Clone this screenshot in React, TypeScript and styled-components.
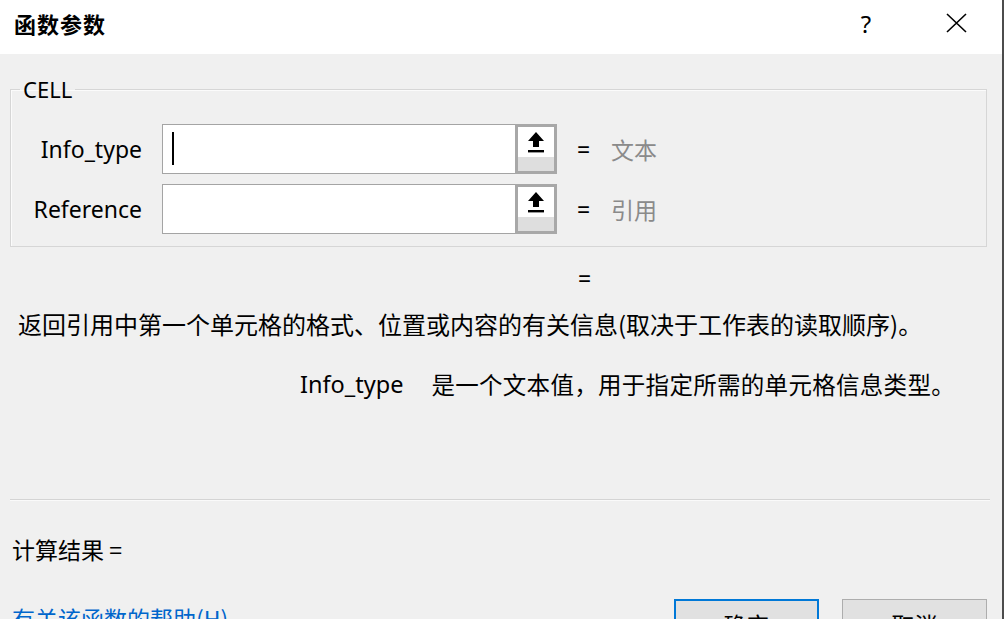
import React from 'react';
import styled, {createGlobalStyle} from 'styled-components';

const GlobalStyle = createGlobalStyle`
    html, body {
        margin: 0;
        padding: 0;
        background: #f0f0f0;
    }
    body {
        font-family: "Noto Sans", "Noto Sans CJK SC", sans-serif;
        color: #000;
    }
`;

const Window = styled.div`
    width: 1002px;
    height: 619px;
    overflow: hidden;
    background: #f0f0f0;
    border-right: 2px solid #4c4c4c;
    display: flex;
    flex-direction: column;
`;

const TitleBar = styled.div`
    height: 54px;
    flex-shrink: 0;
    background: #fff;
    display: flex;
    align-items: center;
    padding-left: 14px;
`;

const Title = styled.div`
    font-family: "Noto Sans CJK SC", sans-serif;
    font-size: 22px;
    font-weight: 700;
    letter-spacing: 1px;
    flex: 1;
    margin-top: -8px;
`;

const TitleButton = styled.div<{$w: number}>`
    width: ${(p) => p.$w}px;
    height: 44px;
    display: flex;
    align-items: center;
    justify-content: center;
    font-size: 24px;
    margin-top: -8px;
`;

const Body = styled.div`
    flex: 1;
    padding: 20px 15px 0 10px;
    display: flex;
    flex-direction: column;
`;

const GroupBox = styled.fieldset`
    margin: 0;
    padding: 20px 0 12px 0;
    border: 1px solid #d6d6d6;
    box-shadow: inset 1px 1px 0 #fbfbfb;
    min-width: 0;
`;

const Legend = styled.legend`
    margin-left: 9px;
    padding: 0 3px;
    font-size: 22px;
    line-height: 30px;
`;

const ArgGrid = styled.div`
    display: grid;
    grid-template-columns: 131px 395px 14px 1fr;
    column-gap: 20px;
    row-gap: 10px;
`;

const ArgLabel = styled.div`
    text-align: right;
    font-size: 23px;
    line-height: 50px;
`;

const InputWrap = styled.div`
    display: flex;
    height: 50px;
`;

const TextBox = styled.div`
    flex: 1;
    background: #fff;
    border: 1px solid #a4a4a4;
    border-right: none;
    position: relative;
`;

const Caret = styled.div`
    position: absolute;
    left: 9px;
    top: 7px;
    width: 2px;
    height: 33px;
    background: #000;
`;

const RefButton = styled.div`
    width: 36px;
    border: 3px solid #a8a8a8;
    background: #dedede;
    display: flex;
    flex-direction: column;
`;

const RefFace = styled.div`
    height: 30px;
    background: #fff;
    display: flex;
    align-items: center;
    justify-content: center;
`;

const EqualsCell = styled.div`
    font-size: 23px;
    line-height: 50px;
`;

const ValueCell = styled.div`
    font-family: "Noto Sans CJK SC", sans-serif;
    font-size: 23px;
    line-height: 50px;
    color: #8a8a8a;
`;

const ResultEquals = styled.div`
    margin-top: 18px;
    margin-left: 568px;
    font-size: 23px;
    line-height: 26px;
`;

const Description = styled.div`
    margin-top: 18px;
    padding-left: 8px;
    font-family: "Noto Sans CJK SC", sans-serif;
    font-size: 24px;
    line-height: 30px;
    white-space: nowrap;
`;

const DetailLine = styled.div`
    margin-top: 30px;
    padding-left: 290px;
    display: flex;
    font-size: 23.5px;
    line-height: 30px;
    white-space: nowrap;
`;

const DetailName = styled.span`
    font-family: "Noto Sans", sans-serif;
    margin-right: 28px;
`;

const DetailText = styled.span`
    font-family: "Noto Sans CJK SC", sans-serif;
    letter-spacing: 0.3px;
`;

const Separator = styled.div`
    margin-top: 100px;
    width: 980px;
    height: 1px;
    background: #d4d4d4;
    box-shadow: 0 1px 0 #fafafa;
`;

const ResultLine = styled.div`
    margin-top: 34px;
    padding-left: 2px;
    font-family: "Noto Sans CJK SC", sans-serif;
    font-size: 23px;
    line-height: 30px;
`;

const Footer = styled.div`
    margin-top: 35px;
    display: flex;
    align-items: flex-start;
`;

const HelpLink = styled.a`
    flex: 1;
    padding-left: 2px;
    padding-top: 4px;
    font-family: "Noto Sans CJK SC", sans-serif;
    font-size: 23px;
    line-height: 30px;
    color: #0066cc;
    text-decoration: none;
`;

const DialogButton = styled.button<{$primary?: boolean}>`
    width: 145px;
    height: 44px;
    margin-left: 23px;
    box-sizing: border-box;
    background: #e1e1e1;
    border: ${(p) => (p.$primary ? '2px solid #0078d7' : '1px solid #adadad')};
    font-family: "Noto Sans CJK SC", sans-serif;
    font-size: 23px;
    padding: 6px 0 0;
    color: #000;
`;

const UploadArrow: React.FC = () => (
    <svg width='18' height='22' viewBox='0 0 18 22'>
        <path d='M9 1 L17 10 L12 10 L12 16 L6 16 L6 10 L1 10 Z' fill='#000'/>
        <rect x='1' y='19' width='16' height='2.4' fill='#000'/>
    </svg>
);

const CloseIcon: React.FC = () => (
    <svg width='21' height='20' viewBox='0 0 21 20'>
        <path d='M1 1 L20 19 M20 1 L1 19' stroke='#000' strokeWidth='1.6' fill='none'/>
    </svg>
);

interface Arg {
    name: string;
    value: string;
    focused?: boolean;
}

const args: Arg[] = [
    {name: 'Info_type', value: '文本', focused: true},
    {name: 'Reference', value: '引用'},
];

const App: React.FC = () => (
    <>
        <GlobalStyle/>
        <Window>
            <TitleBar>
                <Title>{'函数参数'}</Title>
                <TitleButton $w={88}>{'?'}</TitleButton>
                <TitleButton $w={92}><CloseIcon/></TitleButton>
            </TitleBar>
            <Body>
                <GroupBox>
                    <Legend>{'CELL'}</Legend>
                    <ArgGrid>
                        {args.map((a) => (
                            <React.Fragment key={a.name}>
                                <ArgLabel>{a.name}</ArgLabel>
                                <InputWrap>
                                    <TextBox>{a.focused && <Caret/>}</TextBox>
                                    <RefButton>
                                        <RefFace><UploadArrow/></RefFace>
                                    </RefButton>
                                </InputWrap>
                                <EqualsCell>{'='}</EqualsCell>
                                <ValueCell>{a.value}</ValueCell>
                            </React.Fragment>
                        ))}
                    </ArgGrid>
                </GroupBox>
                <ResultEquals>{'='}</ResultEquals>
                <Description>
                    {'返回引用中第一个单元格的格式、位置或内容的有关信息(取决于工作表的读取顺序)。'}
                </Description>
                <DetailLine>
                    <DetailName>{'Info_type'}</DetailName>
                    <DetailText>{'是一个文本值，用于指定所需的单元格信息类型。'}</DetailText>
                </DetailLine>
                <Separator/>
                <ResultLine>{'计算结果 ='}</ResultLine>
                <Footer>
                    <HelpLink href='#'>{'有关该函数的帮助(H)'}</HelpLink>
                    <DialogButton $primary>{'确定'}</DialogButton>
                    <DialogButton>{'取消'}</DialogButton>
                </Footer>
            </Body>
        </Window>
    </>
);

export default App;
